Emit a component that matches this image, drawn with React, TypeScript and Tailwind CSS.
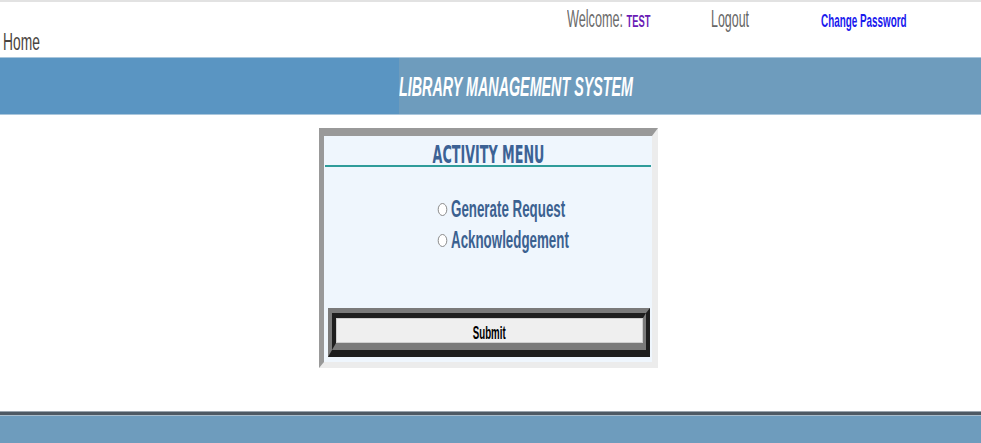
import React from "react";

const sans = "font-['Liberation_Sans',Arial,sans-serif]";

const Squeeze = ({ children, className = "" }: { children: React.ReactNode; className?: string }) => (
  <span className={`inline-block whitespace-nowrap ${className}`}>{children}</span>
);

const Radio = () => (
  <svg width="11" height="15" viewBox="0 0 11 15" className="mr-[3px] shrink-0">
    <ellipse cx="5.5" cy="7.5" rx="4.3" ry="6" fill="#fff" stroke="#8a8a8a" strokeWidth="1" />
  </svg>
);

const App = () => {
  const options = ["Generate Request", "Acknowledgement"];

  return (
    <div className={`w-full h-[443px] bg-white flex flex-col overflow-hidden ${sans}`}>
      <div className="h-[2px] bg-[#e2e2e2]" />

      {/* header */}
      <div className="h-[55px] flex flex-col">
        <div className="h-[29px] pt-[6px] flex items-baseline pl-[567px] leading-none">
          <div className="w-[144px] shrink-0">
            <Squeeze className="origin-left scale-x-[0.55]">
              <span className="text-[23px] text-[#6b6b6b]">Welcome: </span>
              <span className="text-[17px] font-bold text-[#6a1bb5]">TEST</span>
            </Squeeze>
          </div>
          <div className="w-[110px] shrink-0">
            <Squeeze className="origin-left scale-x-[0.54] text-[23px] text-[#666]">Logout</Squeeze>
          </div>
          <div className="shrink-0">
            <Squeeze className="origin-left scale-x-[0.52] text-[19px] font-bold text-[#1a1aee]">
              Change Password
            </Squeeze>
          </div>
        </div>
        <div className="pl-[3px] leading-none">
          <Squeeze className="origin-left scale-x-[0.6] text-[23px] text-[#4a4440]">Home</Squeeze>
        </div>
      </div>

      {/* banner */}
      <div className="h-[58px] border-y border-[#a9c6dc] flex">
        <div className="w-[399px] bg-[#5a95c2]" />
        <div className="flex-1 bg-[#6e9cbd] flex items-center pt-[2px] leading-none">
          <Squeeze className="origin-left scale-x-[0.53] text-[27px] font-bold italic text-white">
            LIBRARY MANAGEMENT SYSTEM
          </Squeeze>
        </div>
      </div>

      {/* main */}
      <div className="flex-1 flex justify-center pt-[13px] pr-[4px]">
        <div className="w-[339px] h-[240px] border-t-[8px] border-l-[5px] border-r-[6px] border-b-[6px] border-t-[#999] border-l-[#999] border-r-[#ececec] border-b-[#ececec] bg-[#eff6fd] flex flex-col">
          <div className="h-[31px] mx-[1px] pt-[7px] border-b-2 border-[#2f9c9a] flex justify-center leading-none">
            <Squeeze className="origin-center scale-x-[0.53] text-[24px] font-bold text-[#3c6295] font-['DejaVu_Sans',sans-serif]">
              ACTIVITY MENU
            </Squeeze>
          </div>

          <div className="flex-1 pt-[27px] pl-[113px]">
            {options.map((o) => (
              <div key={o} className="h-[31px] flex items-center leading-[31px]">
                <Radio />
                <Squeeze className="origin-left scale-x-[0.58] text-[23px] font-bold text-[#3b6190]">{o}</Squeeze>
              </div>
            ))}
          </div>

          <div className="ml-[4px] mr-[2px] mb-[5px] border-t-[5px] border-l-[4px] border-b-[7px] border-r-[4px] border-t-[#7a7a7a] border-l-[#7a7a7a] border-b-[#1e1e1e] border-r-[#1e1e1e]">
            <div className="border-t-[5px] border-l-[4px] border-b-[7px] border-r-[3px] border-t-[#1e1e1e] border-l-[#1e1e1e] border-b-[#7a7a7a] border-r-[#7a7a7a]">
              <div className="h-[25px] bg-[#efefef] border border-[#cfcfcf] flex items-center justify-center pt-[3px] leading-none">
                <Squeeze className="origin-center scale-x-[0.51] text-[19px] font-bold text-black">Submit</Squeeze>
              </div>
            </div>
          </div>
        </div>
      </div>

      {/* footer */}
      <div className="h-[32px] flex flex-col">
        <div className="h-px bg-[#9aa4ad]" />
        <div className="h-[3px] bg-[#4e5963]" />
        <div className="h-px bg-[#a8bccb]" />
        <div className="flex-1 bg-[#6e9cbd]" />
      </div>
    </div>
  );
};

export default App;
